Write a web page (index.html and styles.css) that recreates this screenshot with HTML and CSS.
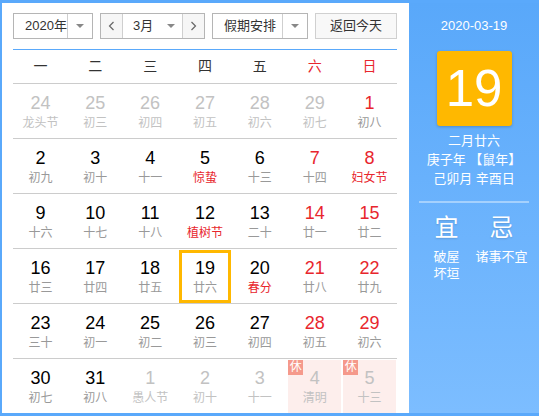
FILE: index.html
```html
<!DOCTYPE html>
<html lang="zh-CN">
<head>
<meta charset="utf-8">
<title>万年历</title>
<link rel="stylesheet" href="styles.css">
</head>
<body>
<div class="frame">
  <div class="main">
    <div class="toolbar">
      <div class="select year"><span class="sel-text">2020年</span><span class="sel-arrow"><i class="tri"></i></span></div>
      <div class="month-group">
        <span class="nav-btn"><svg width="7" height="10" viewBox="0 0 7 10"><polyline points="5.5,1 1.5,5 5.5,9" fill="none" stroke="#666" stroke-width="1.2"/></svg></span>
        <span class="month-sel"><span class="sel-text">3月</span><i class="tri"></i></span>
        <span class="nav-btn"><svg width="7" height="10" viewBox="0 0 7 10"><polyline points="1.5,1 5.5,5 1.5,9" fill="none" stroke="#666" stroke-width="1.2"/></svg></span>
      </div>
      <div class="select holiday"><span class="sel-text">假期安排</span><span class="sel-arrow"><i class="tri"></i></span></div>
      <div class="today-btn">返回今天</div>
    </div>
    <div class="weekdays">
      <span>一</span><span>二</span><span>三</span><span>四</span><span>五</span><span class="red">六</span><span class="red">日</span>
    </div>
    <div class="weeks">
      <div class="week">
        <div class="cell other"><b>24</b><em>龙头节</em></div>
        <div class="cell other"><b>25</b><em>初三</em></div>
        <div class="cell other"><b>26</b><em>初四</em></div>
        <div class="cell other"><b>27</b><em>初五</em></div>
        <div class="cell other"><b>28</b><em>初六</em></div>
        <div class="cell other"><b>29</b><em>初七</em></div>
        <div class="cell weekend"><b>1</b><em>初八</em></div>
      </div>
      <div class="week">
        <div class="cell"><b>2</b><em>初九</em></div>
        <div class="cell"><b>3</b><em>初十</em></div>
        <div class="cell"><b>4</b><em>十一</em></div>
        <div class="cell"><b>5</b><em class="fest">惊蛰</em></div>
        <div class="cell"><b>6</b><em>十三</em></div>
        <div class="cell weekend"><b>7</b><em>十四</em></div>
        <div class="cell weekend"><b>8</b><em class="fest">妇女节</em></div>
      </div>
      <div class="week">
        <div class="cell"><b>9</b><em>十六</em></div>
        <div class="cell"><b>10</b><em>十七</em></div>
        <div class="cell"><b>11</b><em>十八</em></div>
        <div class="cell"><b>12</b><em class="fest">植树节</em></div>
        <div class="cell"><b>13</b><em>二十</em></div>
        <div class="cell weekend"><b>14</b><em>廿一</em></div>
        <div class="cell weekend"><b>15</b><em>廿二</em></div>
      </div>
      <div class="week">
        <div class="cell"><b>16</b><em>廿三</em></div>
        <div class="cell"><b>17</b><em>廿四</em></div>
        <div class="cell"><b>18</b><em>廿五</em></div>
        <div class="cell selected"><b>19</b><em>廿六</em></div>
        <div class="cell"><b>20</b><em class="fest">春分</em></div>
        <div class="cell weekend"><b>21</b><em>廿八</em></div>
        <div class="cell weekend"><b>22</b><em>廿九</em></div>
      </div>
      <div class="week">
        <div class="cell"><b>23</b><em>三十</em></div>
        <div class="cell"><b>24</b><em>初一</em></div>
        <div class="cell"><b>25</b><em>初二</em></div>
        <div class="cell"><b>26</b><em>初三</em></div>
        <div class="cell"><b>27</b><em>初四</em></div>
        <div class="cell weekend"><b>28</b><em>初五</em></div>
        <div class="cell weekend"><b>29</b><em>初六</em></div>
      </div>
      <div class="week last">
        <div class="cell"><b>30</b><em>初七</em></div>
        <div class="cell"><b>31</b><em>初八</em></div>
        <div class="cell other"><b>1</b><em>愚人节</em></div>
        <div class="cell other"><b>2</b><em>初十</em></div>
        <div class="cell other"><b>3</b><em>十一</em></div>
        <div class="cell other rest"><span class="badge">休</span><b>4</b><em>清明</em></div>
        <div class="cell other rest"><span class="badge">休</span><b>5</b><em>十三</em></div>
      </div>
    </div>
  </div>
  <aside class="panel">
    <div class="p-date">2020-03-19</div>
    <div class="p-day">19</div>
    <div class="p-info">
      <div>二月廿六</div>
      <div>庚子年 【鼠年】</div>
      <div>己卯月 辛酉日</div>
    </div>
    <div class="p-line"></div>
    <div class="p-yiji">
      <div class="p-col">
        <div class="p-big">宜</div>
        <div class="p-sub">破屋<br>坏垣</div>
      </div>
      <div class="p-col">
        <div class="p-big">忌</div>
        <div class="p-sub">诸事不宜</div>
      </div>
    </div>
  </aside>
</div>
</body>
</html>
```
FILE: styles.css
```css
* { box-sizing: border-box; }
html, body { margin: 0; padding: 0; }
body {
  font-family: "Liberation Sans", "Noto Sans CJK SC", sans-serif;
  color: #333;
  background: #fff;
}
.frame {
  width: 539px;
  height: 416px;
  background: #5aa9fb;
  padding: 3px 0 3px 2px;
  display: flex;
}
.main {
  width: 407px;
  background: #fff;
  padding: 10px 12px 0 11px;
  display: flex;
  flex-direction: column;
}
.toolbar {
  display: flex;
  gap: 7px;
  height: 26px;
  margin-bottom: 10px;
  font-size: 13px;
}
.select, .month-group {
  display: flex;
  border: 1px solid #b5b5b5;
  background: #fff;
  height: 26px;
}
.year { width: 80px; }
.holiday { width: 96px; }
.sel-text {
  flex: 1;
  line-height: 24px;
  padding-left: 11px;
  color: #333;
}
.sel-arrow {
  width: 25px;
  border-left: 1px solid #cfcfcf;
  display: flex;
  align-items: center;
  justify-content: center;
}
.tri {
  display: block;
  width: 0;
  height: 0;
  border-left: 4px solid transparent;
  border-right: 4px solid transparent;
  border-top: 4px solid #888;
}
.month-group { width: 105px; }
.nav-btn {
  width: 22px;
  background: #f6f6f6;
  display: flex;
  align-items: center;
  justify-content: center;
}
.nav-btn:first-child { border-right: 1px solid #cfcfcf; }
.nav-btn:last-child { border-left: 1px solid #cfcfcf; }
.month-sel {
  flex: 1;
  display: flex;
  align-items: center;
  padding-right: 7px;
}
.month-sel .sel-text { padding-left: 10px; }
.today-btn {
  margin-left: auto;
  width: 82px;
  height: 26px;
  border: 1px solid #d0d0d0;
  background: #f8f8f8;
  text-align: center;
  line-height: 24px;
  color: #333;
}
.weekdays {
  display: grid;
  grid-template-columns: repeat(7, 1fr);
  border-top: 1px solid #5aa9fb;
  border-bottom: 1px solid #cccccc;
  height: 35px;
  line-height: 33px;
  font-size: 14px;
  text-align: center;
  color: #333;
}
.red { color: #e8262d; }
.week {
  display: grid;
  grid-template-columns: repeat(7, 1fr);
  height: 55px;
  border-bottom: 1px solid #cccccc;
}
.week.last { height: 54px; border-bottom: 0; }
.cell {
  position: relative;
  margin: 1px 1px 0;
  padding-top: 8px;
  text-align: center;
  display: flex;
  flex-direction: column;
}
.cell b {
  font-weight: normal;
  font-size: 18px;
  line-height: 20px;
  color: #000;
}
.cell em {
  font-style: normal;
  font-size: 12px;
  line-height: 18px;
  margin-top: 1px;
  color: #999;
}
.cell.weekend b { color: #e8262d; }
.cell em.fest { color: #e8262d; }
.cell.other b, .cell.other em { color: #c2c2c2; }
.cell.selected { box-shadow: inset 0 0 0 3px #ffb800; }
.cell.rest { background: #fdeeec; }
.badge {
  position: absolute;
  left: 0;
  top: 0;
  width: 15px;
  height: 15px;
  background: #f5998b;
  color: #fff;
  font-size: 12px;
  line-height: 15px;
  text-align: center;
}
.panel {
  flex: 1;
  background: linear-gradient(to bottom, #59a8fa, #7cbdff);
  color: #fff;
  text-align: center;
  padding-top: 13px;
}
.p-date {
  font-size: 13px;
  line-height: 20px;
}
.p-day {
  width: 75px;
  height: 75px;
  margin: 15px auto 0;
  background: #ffb800;
  border-radius: 3px;
  box-shadow: 0 1px 3px rgba(0, 0, 0, 0.2);
  font-size: 51px;
  line-height: 75px;
  color: #fff;
}
.p-info {
  margin-top: 5px;
  font-size: 13px;
  line-height: 19px;
}
.p-line {
  height: 2px;
  margin: 13px 10px 0;
  background: rgba(255, 255, 255, 0.4);
}
.p-yiji {
  display: flex;
  margin: 10px 10px 0;
}
.p-col { flex: 1; }
.p-big {
  font-size: 24px;
  line-height: 30px;
  text-shadow: 0 1px 2px rgba(0, 0, 0, 0.15);
}
.p-sub {
  margin-top: 5px;
  font-size: 13px;
  line-height: 17px;
}
```
